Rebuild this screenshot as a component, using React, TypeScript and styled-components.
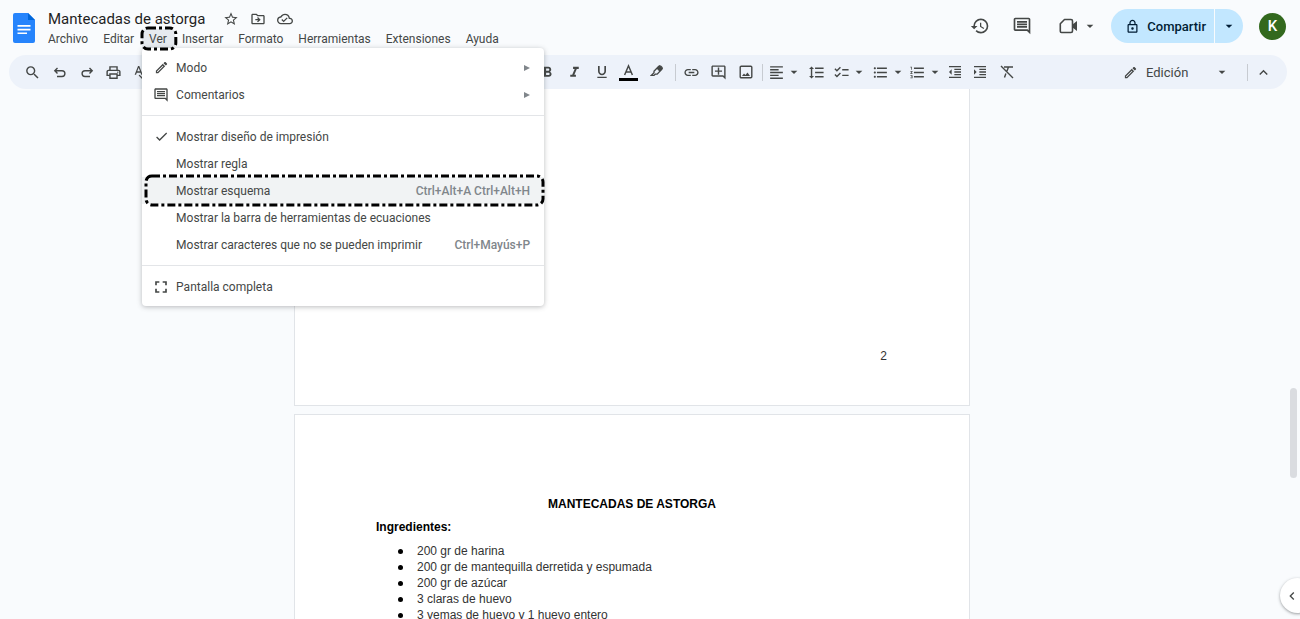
import React from "react";
import styled, { createGlobalStyle } from "styled-components";
import {
  MdStarBorder,
  MdOutlineDriveFileMove,
  MdOutlineCloudDone,
  MdHistory,
  MdOutlineInsertComment,
  MdOutlineLock,
  MdSearch,
  MdOutlinePrint,
  MdSpellcheck,
  MdFormatBold,
  MdFormatItalic,
  MdFormatUnderlined,
  MdInsertLink,
  MdOutlineAddComment,
  MdFormatAlignLeft,
  MdFormatLineSpacing,
  MdChecklist,
  MdFormatListBulleted,
  MdFormatListNumbered,
  MdFormatIndentDecrease,
  MdFormatIndentIncrease,
  MdOutlineEdit,
  MdArrowDropDown,
  MdKeyboardArrowUp,
  MdKeyboardArrowLeft,
  MdCheck,
  MdFullscreen,
} from "react-icons/md";

const GlobalStyle = createGlobalStyle`
  *, *::before, *::after { box-sizing: border-box; }
  body {
    margin: 0;
    background: #f9fbfd;
    color: #444746;
    font-family: Roboto, "Liberation Sans", sans-serif;
    font-size: 12px;
    overflow: hidden;
  }
  button {
    padding: 0;
    border: 0;
    background: none;
    color: inherit;
    font: inherit;
    cursor: pointer;
  }
  svg { display: block; flex: none; }
`;

const Shell = styled.div`
  display: flex;
  flex-direction: column;
  height: 100vh;
`;

const Header = styled.header`
  display: flex;
  align-items: flex-start;
  height: 55px;
  padding: 9px 14px 0 13px;
`;

const LogoLink = styled.a`
  margin: 4px 6px 0 0;
`;

const Heading = styled.div`
  flex: 1;
`;

const TitleRow = styled.div`
  display: flex;
  align-items: center;
  gap: 11px;
  height: 20px;
  padding-left: 7px;
`;

const Title = styled.h1`
  margin: 0 7px 0 0;
  font-size: 15px;
  font-weight: 400;
  line-height: 20px;
  color: #1f1f1f;
`;

const IconButton = styled.button`
  display: flex;
  align-items: center;
  justify-content: center;
`;

const MenuBar = styled.nav`
  display: flex;
  height: 20px;
`;

const MenuSlot = styled.div`
  position: relative;
`;

const MenuButton = styled.button<{ $open?: boolean }>`
  height: 20px;
  padding: 0 8px 0 7px;
  border-radius: 4px;
  line-height: 20px;
  background: ${(p) => (p.$open ? "#e6eaef" : "none")};
`;

const MarkerBox = styled.div<{ $inset: string }>`
  position: absolute;
  inset: ${(p) => p.$inset};
  pointer-events: none;
  z-index: 3;
  svg { width: 100%; height: 100%; overflow: visible; }
  rect {
    fill: none;
    stroke: #000;
    stroke-width: 3;
    stroke-dasharray: 8 3 3 3;
  }
`;

const Dropdown = styled.div`
  position: absolute;
  top: 19px;
  left: 0;
  z-index: 2;
  width: 402px;
  padding: 6px 0;
  background: #fff;
  border-radius: 4px;
  box-shadow: 0 1px 5px rgba(60, 64, 67, 0.35);
`;

const MenuItem = styled.button<{ $active?: boolean }>`
  position: relative;
  display: flex;
  align-items: center;
  width: 100%;
  height: 27px;
  padding: 0 14px 0 11px;
  text-align: left;
  background: ${(p) => (p.$active ? "#f1f3f4" : "none")};
`;

const ItemIcon = styled.span`
  display: flex;
  justify-content: center;
  width: 16px;
  margin-right: 7px;
`;

const ItemLabel = styled.span`
  flex: 1;
  white-space: nowrap;
`;

const Shortcut = styled.span`
  color: #80868b;
  font-weight: 500;
`;

const Divider = styled.hr`
  height: 1px;
  margin: 7px 0;
  border: 0;
  background: #e3e5e8;
`;

const Actions = styled.div`
  display: flex;
  align-items: center;
`;

const HeaderButton = styled(IconButton)`
  width: 42px;
  height: 34px;
`;

const MeetButton = styled(IconButton)`
  gap: 4px;
  width: 50px;
  height: 34px;
  margin-left: 10px;
`;

const ShareGroup = styled.div`
  display: flex;
  gap: 1px;
  margin: 0 16px 0 8px;
  color: #001d35;
`;

const ShareButton = styled.button`
  display: flex;
  align-items: center;
  gap: 7px;
  height: 34px;
  padding: 0 8px 0 14px;
  border-radius: 17px 0 0 17px;
  background: #c2e7ff;
  font-size: 13px;
  font-weight: 500;
`;

const ShareMore = styled(IconButton)`
  width: 28px;
  height: 34px;
  border-radius: 0 17px 17px 0;
  background: #c2e7ff;
`;

const Avatar = styled.button`
  width: 27px;
  height: 27px;
  border-radius: 50%;
  background: #33691e;
  color: #fff;
  font-size: 15px;
  font-weight: 500;
`;

const Toolbar = styled.div`
  display: flex;
  align-items: center;
  height: 34px;
  margin: 0 13px 0 9px;
  padding: 0 10px 0 9px;
  border-radius: 17px;
  background: #edf2fa;
`;

const Tool = styled(IconButton)<{ $w?: number }>`
  flex: none;
  gap: 1px;
  width: ${(p) => p.$w ?? 27}px;
  height: 24px;
`;

const Covered = styled.div`
  width: 380px;
`;

const Separator = styled.span`
  width: 1px;
  height: 17px;
  margin: 0 2px 0 3px;
  background: #c7cbd1;
`;

const ModeButton = styled.button`
  display: flex;
  align-items: center;
  width: 107px;
  margin: 0 14px 0 auto;
  font-size: 13px;
  span { flex: 1; padding-left: 8px; text-align: left; }
`;

const Workspace = styled.main`
  position: relative;
  flex: 1;
  min-height: 0;
  overflow: hidden;
  display: flex;
  flex-direction: column;
  align-items: center;
  gap: 8px;
  padding-right: 36px;
`;

const Page = styled.article<{ $tail?: boolean }>`
  flex: none;
  display: flex;
  flex-direction: column;
  justify-content: ${(p) => (p.$tail ? "flex-end" : "flex-start")};
  width: 676px;
  min-height: ${(p) => (p.$tail ? "317px" : "874px")};
  padding: ${(p) => (p.$tail ? "0 82px 41px" : "81px 81px")};
  border: 1px solid #e1e4e8;
  border-top-width: ${(p) => (p.$tail ? "0" : "1px")};
  background: #fff;
  color: #333;
  font-family: "Liberation Sans", Arial, sans-serif;
`;

const PageNumber = styled.p`
  margin: 0;
  line-height: 16px;
  text-align: right;
`;

const RecipeTitle = styled.h2`
  margin: 0 0 7px;
  font-size: 12px;
  line-height: 16px;
  text-align: center;
  color: #000;
`;

const Subheading = styled.h3`
  margin: 0 0 8px;
  font-size: 12px;
  line-height: 16px;
  color: #000;
`;

const Ingredients = styled.ul`
  margin: 0;
  padding: 0;
  list-style: none;
`;

const Ingredient = styled.li`
  display: flex;
  align-items: center;
  gap: 14px;
  padding-left: 22px;
  line-height: 16px;
  &::before {
    content: "";
    width: 5px;
    height: 5px;
    border-radius: 50%;
    background: #000;
  }
`;

const ScrollThumb = styled.div`
  position: absolute;
  top: 299px;
  right: 3px;
  width: 7px;
  height: 90px;
  border-radius: 4px;
  background: #dadce0;
`;

const PanelToggle = styled.button`
  position: absolute;
  right: -15px;
  bottom: 6px;
  width: 35px;
  height: 35px;
  padding-left: 4px;
  border-radius: 50%;
  background: #fff;
  box-shadow: 0 1px 3px rgba(60, 64, 67, 0.5);
`;

const Logo = () => (
  <svg width="22" height="30" viewBox="0 0 22 30" aria-hidden="true">
    <path d="M2 0h13l7 7v21a2 2 0 0 1-2 2H2a2 2 0 0 1-2-2V2a2 2 0 0 1 2-2z" fill="#2684fc" />
    <path d="M15 0l7 7h-7z" fill="#0066da" />
    <path d="M4.500 12h13v1.700h-13zM4.500 15.700h13v1.700h-13zM4.500 19.400h9.500v1.700h-9.500z" fill="#fff" />
  </svg>
);

const Stroke = ({ children }: { children: React.ReactNode }) => (
  <svg width="16" height="16" viewBox="0 0 16 16" fill="none" stroke="currentColor" strokeWidth="1.400" aria-hidden="true">
    {children}
  </svg>
);

const MeetIcon = () => (
  <svg width="19" height="16" viewBox="0 0 19 16" aria-hidden="true">
    <path d="M5.500 1.500H12a1.500 1.500 0 0 1 1.500 1.500v10a1.500 1.500 0 0 1-1.500 1.500H2.500a1.200 1.200 0 0 1-1.200-1.200V5.700z" fill="none" stroke="currentColor" strokeWidth="1.600" strokeLinejoin="round" />
    <path d="M13.500 6.500L18 3v10l-4.500-3.500z" fill="currentColor" />
  </svg>
);

const TextColorIcon = () => (
  <svg width="19" height="18" viewBox="0 0 19 18" aria-hidden="true">
    <path d="M5.600 12L9.500 2.800L13.400 12M7 9h5" fill="none" stroke="currentColor" strokeWidth="1.500" />
    <path d="M0 15h19v3H0z" fill="#000" />
  </svg>
);

const HighlightIcon = () => (
  <svg width="14" height="18" viewBox="0 0 14 18" aria-hidden="true">
    <path d="M4 8.300L8.800 3.200a1.400 1.400 0 0 1 2 0l1 1a1.400 1.400 0 0 1 0 2L7.200 11.200H5.200L4 12.400H1.300L4 9.800z" fill="none" stroke="currentColor" strokeWidth="1.300" />
    <path d="M6.500 5.500L9.500 2.300l3.200 3.200-3 3.200z" fill="currentColor" />
  </svg>
);

const ImageIcon = () => (
  <Stroke>
    <rect x="2.200" y="2.200" width="11.600" height="11.600" rx="1" />
    <path d="M4 12l2-2.600 1.400 1.600L9.500 8.500 12 12z" fill="currentColor" stroke="none" />
  </Stroke>
);

const ClearFormatIcon = () => (
  <Stroke>
    <path d="M5 3h9M9.500 3L8 7M6.900 9.500L5.500 13.500M2 2l12 12" />
  </Stroke>
);

const SubmenuArrow = () => (
  <svg width="6" height="6" viewBox="0 0 6 6" aria-hidden="true">
    <path d="M0 0l6 3-6 3z" fill="#80868b" />
  </svg>
);

const Outline = ({ inset }: { inset: string }) => (
  <MarkerBox $inset={inset} aria-hidden="true">
    <svg>
      <rect width="100%" height="100%" rx="6" />
    </svg>
  </MarkerBox>
);

const Caret = () => <MdArrowDropDown size={16} />;

type Entry = {
  label: string;
  icon?: React.ReactNode;
  keys?: string;
  submenu?: boolean;
  active?: boolean;
};

const groups: Entry[][] = [
  [
    { label: "Modo", icon: <MdOutlineEdit size={15} />, submenu: true },
    { label: "Comentarios", icon: <MdOutlineInsertComment size={16} />, submenu: true },
  ],
  [
    { label: "Mostrar diseño de impresión", icon: <MdCheck size={15} /> },
    { label: "Mostrar regla" },
    { label: "Mostrar esquema", keys: "Ctrl+Alt+A Ctrl+Alt+H", active: true },
    { label: "Mostrar la barra de herramientas de ecuaciones" },
    { label: "Mostrar caracteres que no se pueden imprimir", keys: "Ctrl+Mayús+P" },
  ],
  [{ label: "Pantalla completa", icon: <MdFullscreen size={20} /> }],
];

const ViewMenu = () => (
  <Dropdown role="menu">
    {groups.map((group, i) => (
      <React.Fragment key={i}>
        {i > 0 && <Divider />}
        {group.map((e) => (
          <MenuItem key={e.label} role="menuitem" $active={e.active}>
            <ItemIcon>{e.icon}</ItemIcon>
            <ItemLabel>{e.label}</ItemLabel>
            {e.keys && <Shortcut>{e.keys}</Shortcut>}
            {e.submenu && <SubmenuArrow />}
            {e.active && <Outline inset="-1px 1px -1px 4px" />}
          </MenuItem>
        ))}
      </React.Fragment>
    ))}
  </Dropdown>
);

const menus = ["Archivo", "Editar", "Ver", "Insertar", "Formato", "Herramientas", "Extensiones", "Ayuda"];

const ingredients = [
  "200 gr de harina",
  "200 gr de mantequilla derretida y espumada",
  "200 gr de azúcar",
  "3 claras de huevo",
  "3 yemas de huevo y 1 huevo entero",
];

export default function App() {
  return (
    <Shell>
      <GlobalStyle />
      <Header>
        <LogoLink href="#" aria-label="Documentos">
          <Logo />
        </LogoLink>
        <Heading>
          <TitleRow>
            <Title>Mantecadas de astorga</Title>
            <IconButton aria-label="Destacar"><MdStarBorder size={16} /></IconButton>
            <IconButton aria-label="Mover"><MdOutlineDriveFileMove size={16} /></IconButton>
            <IconButton aria-label="Estado"><MdOutlineCloudDone size={16} /></IconButton>
          </TitleRow>
          <MenuBar>
            {menus.map((name) => (
              <MenuSlot key={name}>
                <MenuButton $open={name === "Ver"}>{name}</MenuButton>
                {name === "Ver" && (
                  <>
                    <ViewMenu />
                    <Outline inset="-1px -1px 0 0" />
                  </>
                )}
              </MenuSlot>
            ))}
          </MenuBar>
        </Heading>
        <Actions>
          <HeaderButton aria-label="Historial"><MdHistory size={20} /></HeaderButton>
          <HeaderButton aria-label="Comentarios"><MdOutlineInsertComment size={20} /></HeaderButton>
          <MeetButton aria-label="Reunión"><MeetIcon /><Caret /></MeetButton>
          <ShareGroup>
            <ShareButton><MdOutlineLock size={15} />Compartir</ShareButton>
            <ShareMore aria-label="Opciones de compartir"><Caret /></ShareMore>
          </ShareGroup>
          <Avatar>K</Avatar>
        </Actions>
      </Header>
      <Toolbar role="toolbar">
        <Tool $w={28} aria-label="Buscar"><MdSearch size={17} /></Tool>
        <Tool aria-label="Deshacer">
          <Stroke><path d="M5.500 4L2.800 6.700l2.700 2.700M3 6.700h7a2.900 2.900 0 0 1 0 5.800H5" /></Stroke>
        </Tool>
        <Tool aria-label="Rehacer">
          <Stroke><path d="M10.500 4l2.700 2.700-2.700 2.700M13 6.700H6a2.900 2.900 0 0 0 0 5.800h5" /></Stroke>
        </Tool>
        <Tool aria-label="Imprimir"><MdOutlinePrint size={17} /></Tool>
        <Tool aria-label="Ortografía"><MdSpellcheck size={16} /></Tool>
        <Covered />
        <Tool aria-label="Negrita"><MdFormatBold size={17} /></Tool>
        <Tool aria-label="Cursiva"><MdFormatItalic size={17} /></Tool>
        <Tool aria-label="Subrayado"><MdFormatUnderlined size={16} /></Tool>
        <Tool aria-label="Color del texto"><TextColorIcon /></Tool>
        <Tool $w={30} aria-label="Resaltar"><HighlightIcon /></Tool>
        <Separator />
        <Tool aria-label="Enlace"><MdInsertLink size={17} /></Tool>
        <Tool aria-label="Añadir comentario"><MdOutlineAddComment size={17} /></Tool>
        <Tool aria-label="Imagen"><ImageIcon /></Tool>
        <Separator />
        <Tool $w={39} aria-label="Alinear"><MdFormatAlignLeft size={17} /><Caret /></Tool>
        <Tool $w={25} aria-label="Interlineado"><MdFormatLineSpacing size={17} /></Tool>
        <Tool $w={41} aria-label="Lista de control"><MdChecklist size={17} /><Caret /></Tool>
        <Tool $w={37} aria-label="Viñetas"><MdFormatListBulleted size={17} /><Caret /></Tool>
        <Tool $w={37} aria-label="Numeración"><MdFormatListNumbered size={17} /><Caret /></Tool>
        <Tool $w={22} aria-label="Reducir sangría"><MdFormatIndentDecrease size={16} /></Tool>
        <Tool aria-label="Aumentar sangría"><MdFormatIndentIncrease size={16} /></Tool>
        <Tool aria-label="Borrar formato"><ClearFormatIcon /></Tool>
        <ModeButton><MdOutlineEdit size={15} /><span>Edición</span><Caret /></ModeButton>
        <Separator />
        <Tool aria-label="Ocultar menús"><MdKeyboardArrowUp size={17} /></Tool>
      </Toolbar>
      <Workspace>
        <Page $tail>
          <PageNumber>2</PageNumber>
        </Page>
        <Page>
          <RecipeTitle>MANTECADAS DE ASTORGA</RecipeTitle>
          <Subheading>Ingredientes:</Subheading>
          <Ingredients>
            {ingredients.map((t) => (
              <Ingredient key={t}>{t}</Ingredient>
            ))}
          </Ingredients>
        </Page>
        <ScrollThumb />
        <PanelToggle aria-label="Mostrar panel lateral"><MdKeyboardArrowLeft size={16} /></PanelToggle>
      </Workspace>
    </Shell>
  );
}
